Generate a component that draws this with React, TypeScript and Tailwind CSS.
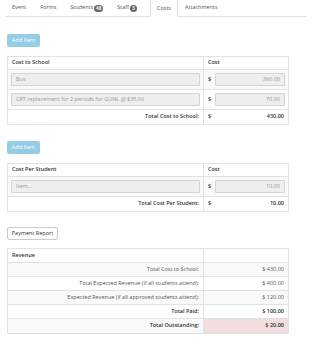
import React from 'react';

const tabs = [
  { label: 'Event' },
  { label: 'Forms' },
  { label: 'Students', badge: '48' },
  { label: 'Staff', badge: '3' },
  { label: 'Costs', active: true },
  { label: 'Attachments' },
];

function AddButton() {
  return (
    <button className="h-[13px] w-[33px] rounded-[2px] bg-[#93cde6] text-[5.5px] text-white leading-none">
      Add Item
    </button>
  );
}

function Input({ value, right }: { value: string; right?: boolean }) {
  return (
    <div
      className={`flex h-[13px] items-center rounded-[1px] border border-[#d4d4d4] bg-[#eeeeee] px-[4px] text-[#999] ${
        right ? 'justify-end' : ''
      }`}
    >
      {value}
    </div>
  );
}

function CostTable({
  title,
  rows,
  totalLabel,
  total,
}: {
  title: string;
  rows: { item: string; cost: string }[];
  totalLabel: string;
  total: string;
}) {
  return (
    <div className="w-[282px] border border-[#e2e2e2]">
      <div className="flex h-[13px] border-b border-[#e2e2e2] font-semibold text-[#333]">
        <div className="flex w-[196px] items-center border-r border-[#e2e2e2] px-[4px]">{title}</div>
        <div className="flex flex-1 items-center px-[4px]">Cost</div>
      </div>
      {rows.map((r, i) => (
        <div
          key={i}
          className={`flex h-[20px] border-b border-[#e2e2e2] ${i % 2 === 0 ? 'bg-[#f9f9f9]' : 'bg-white'}`}
        >
          <div className="flex w-[196px] items-center border-r border-[#e2e2e2] px-[3px]">
            <div className="w-full">
              <Input value={r.item} />
            </div>
          </div>
          <div className="flex flex-1 items-center gap-[4px] pl-[4px] pr-[3px]">
            <span className="font-semibold text-[#333]">$</span>
            <div className="flex-1">
              <Input value={r.cost} right />
            </div>
          </div>
        </div>
      ))}
      <div className="flex h-[14px] font-semibold text-[#333]">
        <div className="flex w-[196px] items-center justify-end border-r border-[#e2e2e2] px-[4px]">
          {totalLabel}
        </div>
        <div className="flex flex-1 items-center justify-between px-[4px]">
          <span>$</span>
          <span>{total}</span>
        </div>
      </div>
    </div>
  );
}

const revenue = [
  { label: 'Total Cost to School:', value: '$ 430.00' },
  { label: 'Total Expected Revenue (if all students attend):', value: '$ 400.00' },
  { label: 'Expected Revenue (if all approved students attend):', value: '$ 120.00' },
  { label: 'Total Paid:', value: '$ 100.00', bold: true },
  { label: 'Total Outstanding:', value: '$ 20.00', bold: true, danger: true },
];

export default function App() {
  return (
    <div className="h-[348px] w-[314px] overflow-hidden bg-white font-['Open_Sans',sans-serif] text-[5.5px] leading-none text-[#555]">
      <div className="ml-[5px] mr-[7px] flex h-[17px] border-b border-[#e2e2e2]">
        {tabs.map((t) => (
          <div
            key={t.label}
            className={`flex items-center gap-[1px] ${
              t.active ? 'ml-[6px] -mb-px border-x border-[#e2e2e2] bg-white px-[6px]' : 'px-[7px]'
            }`}
          >
            <span>{t.label}</span>
            {t.badge && (
              <span className="flex h-[7px] min-w-[7px] items-center justify-center rounded-full bg-[#666] px-[2px] text-[4.5px] font-bold text-white">
                {t.badge}
              </span>
            )}
          </div>
        ))}
      </div>

      <div className="px-[7px]">
        <div className="mt-[17px]">
          <AddButton />
        </div>
        <div className="mt-[9px]">
          <CostTable
            title="Cost to School"
            rows={[
              { item: 'Bus', cost: '360.00' },
              { item: 'CRT replacement for 2 periods for GUNL @ $35.00', cost: '70.00' },
            ]}
            totalLabel="Total Cost to School:"
            total="430.00"
          />
        </div>

        <div className="mt-[16px]">
          <AddButton />
        </div>
        <div className="mt-[9px]">
          <CostTable
            title="Cost Per Student"
            rows={[{ item: 'Item...', cost: '10.00' }]}
            totalLabel="Total Cost Per Student:"
            total="10.00"
          />
        </div>

        <button className="mt-[15px] h-[13px] w-[51px] rounded-[2px] border border-[#ccc] bg-white text-[#333]">
          Payment Report
        </button>

        <div className="mt-[8px] w-[282px] border border-[#e2e2e2]">
          <div className="flex h-[14px] border-b border-[#e2e2e2] font-semibold text-[#333]">
            <div className="flex w-[196px] items-center border-r border-[#e2e2e2] px-[4px]">Revenue</div>
            <div className="flex-1" />
          </div>
          {revenue.map((r, i) => (
            <div
              key={r.label}
              className={`flex h-[14px] ${i < revenue.length - 1 ? 'border-b border-[#e2e2e2]' : ''} ${
                i % 2 === 0 ? 'bg-[#f9f9f9]' : 'bg-white'
              } ${r.bold ? 'font-semibold text-[#333]' : ''}`}
            >
              <div className="flex w-[196px] items-center justify-end border-r border-[#e2e2e2] px-[4px]">
                {r.label}
              </div>
              <div
                className={`flex flex-1 items-center justify-end px-[4px] ${r.danger ? 'bg-[#f2dede]' : ''}`}
              >
                {r.value}
              </div>
            </div>
          ))}
        </div>
      </div>
    </div>
  );
}
